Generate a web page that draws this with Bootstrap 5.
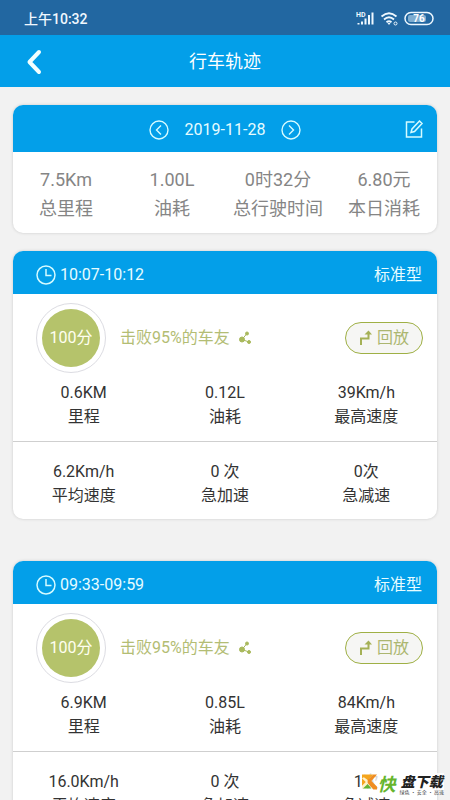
<!DOCTYPE html>
<html lang="zh-CN">
<head>
<meta charset="utf-8">
<meta name="viewport" content="width=device-width, initial-scale=1">
<title>行车轨迹</title>
<link href="https://cdn.jsdelivr.net/npm/bootstrap@5.3.0/dist/css/bootstrap.min.css" rel="stylesheet">
<style>
  body { font-family: Roboto, "Noto Sans CJK SC", sans-serif; font-size: 16px; line-height: 24px; color: #333; background: #f2f2f2; }
  svg { display: block; flex: none; }
  button { line-height: 24px; }
  .status-strip { height: 35px; padding: 3px 16px 0 24px; background: #2267a1; color: #f0f8ff; font-size: 14px; font-weight: 500; }
  .title-strip { height: 52px; padding-top: 2px; background: #039fe9; }
  .title-strip h1 { font-size: 18px; line-height: 28px; font-weight: 400; }
  .back-btn { left: 24px; }
  .scroll-area { padding: 18px 13px 0; overflow-y: auto; scrollbar-width: none; }
  .panel { border: 0; border-radius: 10px; box-shadow: 0 0 3px #c8c8c8; overflow: hidden; }
  .panel-head { background: #039fe9; color: #e6fcff; padding: 5px 15px 0 23px; height: 43px; }
  .date-head { height: 47px; padding: 2px 13px 0; }
  .date-head .edit-btn { right: 13px; }
  .summary { font-size: 18px; line-height: 29px; color: #858585; padding: 13px 0 10px; }
  .panel + .panel { margin-top: 18px; }
  .panel.trip + .trip { margin-top: 42px; }
  .score-row { padding: 9px 14px 8px 23px; color: #b3bd74; }
  .score-ring { width: 70px; height: 70px; border: 1px solid #dcdce2; padding: 5px; }
  .score-dot { background: #b5c36b; color: #fffff0; }
  .beat { margin-left: 14px; }
  .replay { width: 78px; height: 32px; border: 1px solid #9fb045; background: #f6f6f4; color: #acb670; padding: 0; }
  .stats { padding-bottom: 12px; }
  .stats-next { border-top: 1px solid #cfcfcf; padding: 18px 0 11px; }
  .site-mark { right: 6px; bottom: 5px; font-family: "Noto Sans CJK SC", sans-serif; background: #fffc; }
  .mark-quick { color: #65b52d; font-size: 18px; font-weight: 700; font-style: italic; line-height: 20px; }
  .mark-name { font-size: 14px; line-height: 16px; font-weight: 900; font-style: italic; color: #222; }
  .mark-sub { font-size: 5px; line-height: 6px; color: #444; }
</style>
<script src="https://cdn.jsdelivr.net/npm/bootstrap@5.3.0/dist/js/bootstrap.bundle.min.js"></script>
</head>
<body>
<div class="d-flex flex-column vh-100 overflow-hidden position-relative">
  <div class="status-strip d-flex align-items-center justify-content-between flex-shrink-0">
    <span>上午10:32</span>
    <svg width="78" height="16" viewBox="0 0 78 16" fill="none" stroke="#eef8ff" role="img" aria-label="信号 无线网络 电量76">
      <text x="0" y="6" font-size="7" font-weight="700" fill="#eef8ff" stroke="none">HD</text>
      <path d="M2.500 13.500v-1.500M6 13.500v-3M9.500 13.500v-6M13 13.500V4M16.500 13.500V1.500" stroke-width="2"/>
      <path d="M25.500 5.500Q33 -1 40.500 5.500M28 8.500Q33 4 38 8.500M30.500 11.200Q33 9.200 35.500 11.200" stroke-width="1.800"/>
      <path d="M31.500 12h3L33 14z" fill="#eef8ff" stroke="none"/>
      <circle cx="39.500" cy="12.500" r="1.500" stroke-width="1"/>
      <rect x="49" y="1.500" width="28" height="12" rx="6" stroke-width="1.500"/>
      <rect x="52" y="4" width="18" height="7" rx="2" fill="#7fadd0" stroke="none"/>
      <text x="63" y="11" font-size="10" font-weight="700" text-anchor="middle" fill="#fff" stroke="none">76</text>
    </svg>
  </div>
  <header class="title-strip d-flex align-items-center justify-content-center position-relative text-white flex-shrink-0">
    <button type="button" class="back-btn btn p-0 border-0 position-absolute" aria-label="返回">
      <svg width="20" height="26" viewBox="0 0 20 26" fill="none" stroke="#f2ffff" stroke-width="4" stroke-linecap="round" stroke-linejoin="round"><path d="M15 3L5.500 13L15 23"/></svg>
    </button>
    <h1 class="m-0">行车轨迹</h1>
  </header>

  <main class="scroll-area flex-fill">
    <section class="card panel">
      <div class="panel-head date-head d-flex align-items-center justify-content-center position-relative">
        <button type="button" class="btn p-0 border-0" aria-label="前一天"><svg width="20" height="20" viewBox="0 0 20 20" fill="none" stroke="#d5fbff" stroke-width="1.400"><circle cx="10" cy="10" r="9"/><path d="M12 5.500L7.500 10L12 14.500"/></svg></button>
        <span class="px-3">2019-11-28</span>
        <button type="button" class="btn p-0 border-0" aria-label="后一天"><svg width="20" height="20" viewBox="0 0 20 20" fill="none" stroke="#d5fbff" stroke-width="1.400"><circle cx="10" cy="10" r="9"/><path d="M8 5.500L12.500 10L8 14.500"/></svg></button>
        <button type="button" class="edit-btn btn p-0 border-0 position-absolute" aria-label="编辑"><svg width="20" height="20" viewBox="0 0 20 20" fill="none" stroke="#d5fbff" stroke-width="1.500"><path d="M10.500 2H2.500V17H17.500V8.500M7 12.500L8 9L15.500 1L18 3.500L10.500 11.500Z"/></svg></button>
      </div>
      <div class="summary row g-0 text-center text-nowrap">
        <div class="col-3"><div>7.5Km</div><div>总里程</div></div>
        <div class="col-3"><div>1.00L</div><div>油耗</div></div>
        <div class="col-3"><div>0时32分</div><div>总行驶时间</div></div>
        <div class="col-3"><div>6.80元</div><div>本日消耗</div></div>
      </div>
    </section>

    <section class="card panel trip">
      <div class="panel-head d-flex align-items-center">
        <svg width="20" height="20" viewBox="0 0 20 20" fill="none" stroke="#d5fbff" stroke-width="1.500"><circle cx="10" cy="10" r="9"/><path d="M10 4V10.500H15.500"/></svg>
        <span class="ms-1">10:07-10:12</span><span class="ms-auto">标准型</span>
      </div>
      <div class="score-row d-flex align-items-center">
        <div class="score-ring rounded-circle"><div class="score-dot rounded-circle w-100 h-100 d-flex align-items-center justify-content-center">100分</div></div>
        <span class="beat">击败95%的车友</span>
        <svg class="ms-2" width="14" height="14" viewBox="0 0 14 14" fill="#a9b95c" stroke="#a9b95c"><path d="M4 8.500L9 2.500M4 8.500L11 11" fill="none"/><circle cx="4" cy="8.500" r="2.500"/><circle cx="9" cy="2.500" r="1.500"/><circle cx="11" cy="11" r="1.500"/></svg>
        <button type="button" class="replay btn rounded-pill ms-auto d-flex align-items-center justify-content-center gap-1">
          <svg width="14" height="16" viewBox="0 0 14 16" fill="none" stroke="#a5b155" stroke-width="2"><path d="M2 15V8.500H9.500V3"/><path d="M5.500 4.500L9.500 0.500L13 4.500z" fill="#a5b155" stroke="none"/></svg>回放
        </button>
      </div>
      <div class="stats row g-0 text-center">
        <div class="col-4"><div>0.6KM</div><div>里程</div></div>
        <div class="col-4"><div>0.12L</div><div>油耗</div></div>
        <div class="col-4"><div>39Km/h</div><div>最高速度</div></div>
      </div>
      <div class="stats-next row g-0 text-center">
        <div class="col-4"><div>6.2Km/h</div><div>平均速度</div></div>
        <div class="col-4"><div>0 次</div><div>急加速</div></div>
        <div class="col-4"><div>0次</div><div>急减速</div></div>
      </div>
    </section>

    <section class="card panel trip">
      <div class="panel-head d-flex align-items-center">
        <svg width="20" height="20" viewBox="0 0 20 20" fill="none" stroke="#d5fbff" stroke-width="1.500"><circle cx="10" cy="10" r="9"/><path d="M10 4V10.500H15.500"/></svg>
        <span class="ms-1">09:33-09:59</span><span class="ms-auto">标准型</span>
      </div>
      <div class="score-row d-flex align-items-center">
        <div class="score-ring rounded-circle"><div class="score-dot rounded-circle w-100 h-100 d-flex align-items-center justify-content-center">100分</div></div>
        <span class="beat">击败95%的车友</span>
        <svg class="ms-2" width="14" height="14" viewBox="0 0 14 14" fill="#a9b95c" stroke="#a9b95c"><path d="M4 8.500L9 2.500M4 8.500L11 11" fill="none"/><circle cx="4" cy="8.500" r="2.500"/><circle cx="9" cy="2.500" r="1.500"/><circle cx="11" cy="11" r="1.500"/></svg>
        <button type="button" class="replay btn rounded-pill ms-auto d-flex align-items-center justify-content-center gap-1">
          <svg width="14" height="16" viewBox="0 0 14 16" fill="none" stroke="#a5b155" stroke-width="2"><path d="M2 15V8.500H9.500V3"/><path d="M5.500 4.500L9.500 0.500L13 4.500z" fill="#a5b155" stroke="none"/></svg>回放
        </button>
      </div>
      <div class="stats row g-0 text-center">
        <div class="col-4"><div>6.9KM</div><div>里程</div></div>
        <div class="col-4"><div>0.85L</div><div>油耗</div></div>
        <div class="col-4"><div>84Km/h</div><div>最高速度</div></div>
      </div>
      <div class="stats-next row g-0 text-center">
        <div class="col-4"><div>16.0Km/h</div><div>平均速度</div></div>
        <div class="col-4"><div>0 次</div><div>急加速</div></div>
        <div class="col-4"><div>1次</div><div>急减速</div></div>
      </div>
    </section>
  </main>

  <div class="site-mark position-absolute d-flex text-nowrap">
    <svg width="16" height="18" viewBox="0 0 17 18"><path d="M0 1H12L8 5L6 11L0 16Z" fill="#f5a51c"/><path d="M2 4L9 9L4 16H0V13L4 9L0 5Z" fill="#fff1ca"/><path d="M12 1H16L10 8L16 14V17H12L6 10V7Z" fill="#ef8d22"/><path d="M1 16L6 11L10 16Z" fill="#66b432"/></svg>
    <span class="mark-quick">快</span>
    <div class="ms-1 text-center"><div class="mark-name">盘下载</div><div class="mark-sub">绿色 · 安全 · 高速</div></div>
  </div>
</div>
</body>
</html>
